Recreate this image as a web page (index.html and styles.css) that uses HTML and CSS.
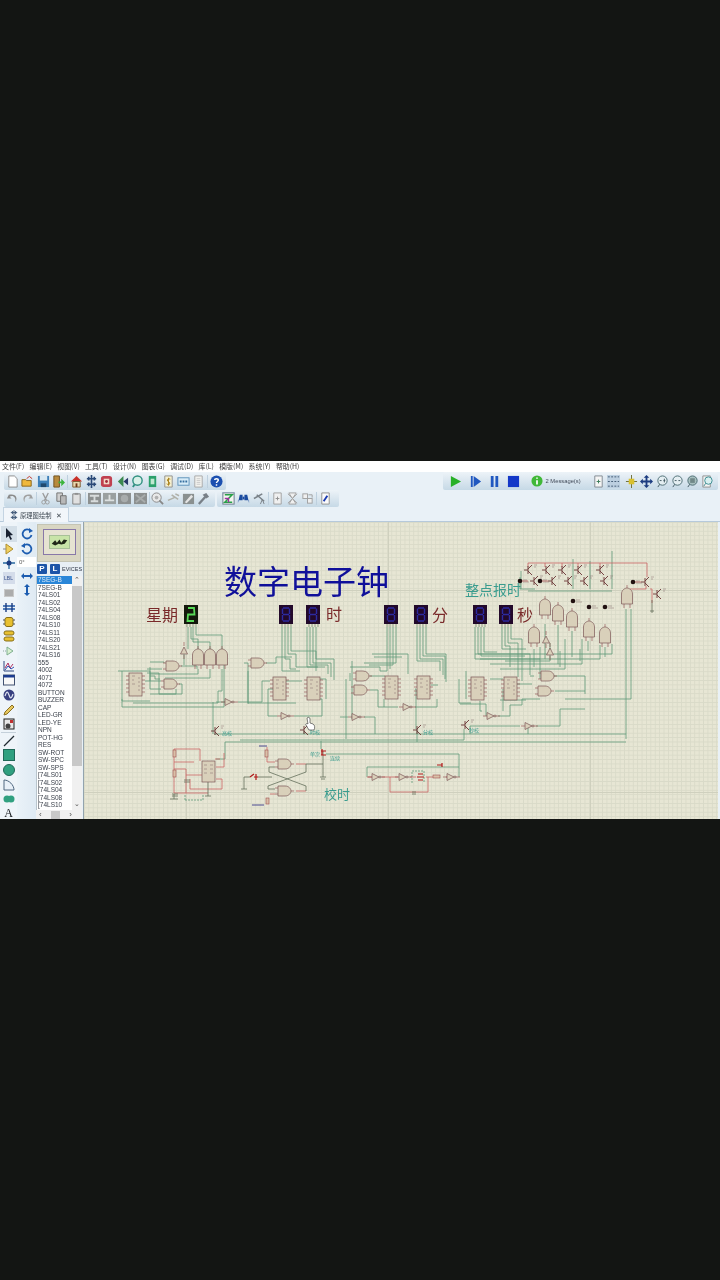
FILE: index.html
```html
<!DOCTYPE html>
<html lang="zh">
<head>
<meta charset="utf-8">
<title>数字电子钟</title>
<link rel="stylesheet" href="styles.css">
</head>
<body>
<svg class="defs" width="0" height="0">
  <defs>
    <g id="and-h"><path d="M-9 -3H-6M-9 3H-6M6 0H10" class="pin"/><path d="M-6 -5H1C5 -5 7 -2 7 0C7 2 5 5 1 5H-6Z" class="gate"/></g>
    <g id="and-v"><path d="M-3 8V12M3 8V12M0 -8V-11" class="pin"/><path d="M-5.500 8V-2C-5.500 -6 -2 -8 0 -8C2 -8 5.500 -6 5.500 -2V8Z" class="gate"/></g>
    <g id="inv-h"><path d="M-8 0H-4M5 0H9" class="pin"/><path d="M-4 -3.500L3 0L-4 3.500Z" class="gate"/><circle cx="4" r="1" class="gate"/></g>
    <g id="inv-v"><path d="M0 -8V-4M0 5V9" class="pin"/><path d="M-3.500 4L0 -3L3.500 4Z" class="gate"/></g>
    <g id="chip"><path d="M-3 3H0M-3 7H0M-3 11H0M-3 15H0M-3 19H0M13 3H16M13 7H16M13 11H16M13 15H16M13 19H16" class="pin"/><rect width="13" height="23" class="gate"/><path d="M3 3H6M3 7H5M3 11H6M9 5H11M9 9H11M9 13H11M9 17H11" class="tiny"/></g>
    <g id="npn"><path d="M0 -4V4M0 -1L4 -5M0 1L4 5M-4 0H0" class="npn"/><path d="M6 -5H9M6 -3H8" class="tiny"/></g>
    <g id="seg"><rect width="14" height="19" class="seg-body"/><path d="M4 3H10M4 9.500H10M4 16H10M3.500 3.500V9M10.500 3.500V9M3.500 10V15.500M10.500 10V15.500" class="seg-dim"/><path d="M3 19V22M6 19V22M9 19V22M12 19V22" class="pin-green"/></g>
    <g id="dot"><circle r="2.300" class="dot"/><path d="M3 -1H7M3 1H9" class="tiny"/></g>
  </defs>
</svg>

<main class="app">
  <nav class="menubar">
    <span>文件(F)</span><span>编辑(E)</span><span>视图(V)</span><span>工具(T)</span><span>设计(N)</span><span>图表(G)</span><span>调试(D)</span><span>库(L)</span><span>模版(M)</span><span>系统(Y)</span><span>帮助(H)</span>
  </nav>

  <section class="toolbars">
    <div class="tb-row tb-row-top">
      <div class="tb tb-file">
        <svg class="ic" viewBox="0 0 14 14"><path d="M3 1H9L12 4V13H3Z" fill="#fff" stroke="#8a8a8a"/></svg>
        <svg class="ic" viewBox="0 0 14 14"><path d="M1 5H5L6 6H11V12H1Z" fill="#f0b83c" stroke="#8a6418"/><path d="M6 4L9 1.500L12 4" fill="none" stroke="#c03020"/></svg>
        <svg class="ic" viewBox="0 0 14 14"><path d="M1 1H13V13H1Z" fill="#3d7fb8"/><path d="M3 1H11V6H3Z" fill="#d8e8f2"/><path d="M4 9H10V13H4Z" fill="#20496e"/></svg>
        <svg class="ic" viewBox="0 0 14 14"><path d="M2 1H8V13H2Z" fill="#b88a3c" stroke="#6d5020"/><path d="M7 7H10V4L14 8L10 12V9H7Z" fill="#3cb43c"/></svg>
        <i class="sep"></i>
        <svg class="ic" viewBox="0 0 14 14"><path d="M1 7L7 1L13 7Z" fill="#c83028"/><path d="M3 7H11V13H3Z" fill="#e8d8b0" stroke="#7a5a30"/><path d="M6 9H8V13H6Z" fill="#703818"/></svg>
        <svg class="ic" viewBox="0 0 14 14"><path d="M7 0V14M2 4H12M2 10H12M4 2V6M10 2V6M4 8V12M10 8V12" stroke="#2a4a78" stroke-width="1.800" fill="none"/></svg>
        <svg class="ic" viewBox="0 0 14 14"><rect x="1" y="1" width="12" height="12" rx="3" fill="#c04050"/><rect x="4" y="4" width="6" height="6" fill="#f2d8c8"/><circle cx="7" cy="7" r="1.500" fill="#a02838"/></svg>
        <svg class="ic" viewBox="0 0 14 14"><path d="M8 1L2 7L8 13Z" fill="#3c8a50"/><path d="M13 3L8 7L13 11Z" fill="#283868"/></svg>
        <svg class="ic" viewBox="0 0 14 14"><circle cx="7" cy="6" r="5" fill="#d8f0e8" stroke="#2f9080" stroke-width="1.500"/><path d="M4 10L2 13" stroke="#2f9080" stroke-width="2"/></svg>
        <svg class="ic" viewBox="0 0 14 14"><path d="M3 1H11V13H3Z" fill="#2ca06c"/><rect x="5" y="4" width="4" height="6" fill="#bfe8d0"/></svg>
        <svg class="ic" viewBox="0 0 14 14"><path d="M3 1H11V13H3Z" fill="#f6f0d0" stroke="#909090"/><path d="M9 4.500C7 3.500 5 4.500 6 6.500C7.500 7.500 9 8 8 10C7 10.500 5.500 10 5 9.500M7 3V11.500" stroke="#a88018" fill="none"/></svg>
        <svg class="ic" viewBox="0 0 14 14"><rect x="1" y="3" width="12" height="8" fill="#d8ecf8" stroke="#5a90b8"/><path d="M3 7H5M6 7H8M9 7H11" stroke="#3870a0" stroke-width="2"/></svg>
        <svg class="ic" viewBox="0 0 14 14"><path d="M3 1H11V13H3Z" fill="#f2f2ee" stroke="#a8a8a8"/><path d="M5 4H9M5 6H9M5 8H9M5 10H9" stroke="#c8c8c8"/></svg>
        <i class="sep"></i>
        <svg class="ic" viewBox="0 0 14 14"><circle cx="7" cy="7" r="6.500" fill="#1c50b0"/><path d="M5 5.500C5 3.500 9 3.500 9 5.500C9 7 7 7 7 8.500M7 10V11.500" stroke="#fff" stroke-width="1.600" fill="none"/></svg>
      </div>
      <div class="tb tb-sim">
        <svg class="sim" viewBox="0 0 14 14"><path d="M2 1L13 7L2 13Z" fill="#28b028"/></svg>
        <svg class="sim" viewBox="0 0 14 14"><path d="M2 1H4V13H2ZM5 1L13 7L5 13Z" fill="#2058c0"/></svg>
        <svg class="sim" viewBox="0 0 14 14"><path d="M3 1H6V13H3ZM8 1H11V13H8Z" fill="#2058c0"/></svg>
        <svg class="sim" viewBox="0 0 14 14"><path d="M1 1H13V13H1Z" fill="#1438c8"/></svg>
        <svg class="info" viewBox="0 0 14 14"><circle cx="7" cy="7" r="6.500" fill="#40b838"/><path d="M7 3V4.500M7 6V11" stroke="#fff" stroke-width="2"/></svg>
        <span class="msg">2 Message(s)</span>
        <svg class="ic" viewBox="0 0 14 14"><path d="M3 1H11V13H3Z" fill="#f4f4f4" stroke="#808890"/><path d="M5 7H9M7 5V9" stroke="#3a7a58"/></svg>
        <svg class="ic ic-on" viewBox="0 0 14 14"><path d="M1 2H13M1 7H13M1 12H13" stroke="#405870" stroke-dasharray="2 1.500"/></svg>
        <svg class="ic ic-gap" viewBox="0 0 14 14"><path d="M7 0V14M1 7H13" stroke="#6a6a30"/><rect x="4" y="4" width="6" height="6" fill="#d8c030"/></svg>
        <svg class="ic" viewBox="0 0 14 14"><path d="M7 0L10 3H8V6H11V4L14 7L11 10V8H8V11H10L7 14L4 11H6V8H3V10L0 7L3 4V6H6V3H4Z" fill="#1c3c80"/></svg>
        <svg class="ic" viewBox="0 0 14 14"><circle cx="7" cy="6" r="5" fill="#e4eef2" stroke="#4a6a70"/><path d="M4 6H6M8 6H10M9 4V8M4 10L2 13" stroke="#405860"/></svg>
        <svg class="ic" viewBox="0 0 14 14"><circle cx="7" cy="6" r="5" fill="#e4eef2" stroke="#4a6a70"/><path d="M4 6H6M8 6H10M4 10L2 13" stroke="#405860"/></svg>
        <svg class="ic" viewBox="0 0 14 14"><circle cx="7" cy="6" r="5" fill="#a8c0c0" stroke="#4a6a70"/><rect x="4.500" y="3.500" width="5" height="5" fill="#708888"/><path d="M4 10L2 13" stroke="#405860"/></svg>
        <svg class="ic" viewBox="0 0 14 14"><path d="M2 1H10V13H2Z" fill="#f4f4f4" stroke="#909090"/><circle cx="8" cy="6" r="4" fill="#d8f0f0" stroke="#3a8a90"/><path d="M5 9L3 12" stroke="#3a8a90"/></svg>
      </div>
    </div>
    <div class="tb-row">
      <div class="tb tb-edit">
        <svg class="ic" viewBox="0 0 14 14"><path d="M3 3L1 7L6 7L4 5C7 3 11 5 10 11C13 7 11 1 3 3Z" fill="#8a8a8a"/></svg>
        <svg class="ic" viewBox="0 0 14 14"><path d="M11 3L13 7L8 7L10 5C7 3 3 5 4 11C1 7 3 1 11 3Z" fill="#a0a0a0"/></svg>
        <i class="sep"></i>
        <svg class="ic" viewBox="0 0 14 14"><path d="M4 1L8 9M10 1L6 9" stroke="#9a9a9a" stroke-width="1.400"/><circle cx="5" cy="11" r="2" fill="none" stroke="#9a9a9a"/><circle cx="9" cy="11" r="2" fill="none" stroke="#9a9a9a"/></svg>
        <svg class="ic" viewBox="0 0 14 14"><path d="M2 1H8V10H2Z" fill="#d0d0d0" stroke="#707070"/><path d="M6 4H12V13H6Z" fill="#b8b8b8" stroke="#707070"/></svg>
        <svg class="ic" viewBox="0 0 14 14"><path d="M3 2H11V13H3Z" fill="#e0e0e0" stroke="#808080"/><path d="M5 1H9V3H5Z" fill="#909090"/></svg>
        <i class="sep"></i>
        <svg class="ic" viewBox="0 0 14 14"><path d="M0 1H14V13H0Z" fill="#8c9090"/><path d="M2 3H12V5H8V9H11V11H3V9H6V5H2Z" fill="#d8dcdc"/></svg>
        <svg class="ic" viewBox="0 0 14 14"><path d="M0 1H14V13H0Z" fill="#9aa0a0"/><path d="M6 3H8V8H12V10H2V8H6Z" fill="#dce0e0"/></svg>
        <svg class="ic" viewBox="0 0 14 14"><path d="M0 1H14V13H0Z" fill="#8c9090"/><circle cx="7" cy="7" r="4" fill="#a8acac"/></svg>
        <svg class="ic" viewBox="0 0 14 14"><path d="M0 1H14V13H0Z" fill="#8c9090"/><path d="M2 3L12 11M12 3L2 11" stroke="#a8acac" stroke-width="2"/></svg>
        <i class="sep"></i>
        <svg class="ic" viewBox="0 0 14 14"><circle cx="6" cy="6" r="5" fill="#e8e8e8" stroke="#888"/><circle cx="6" cy="6" r="2" fill="#b0b0b0"/><path d="M9 9L13 13" stroke="#888" stroke-width="2"/></svg>
        <svg class="ic" viewBox="0 0 14 14"><path d="M1 9L8 6M5 3L12 8M9 2L13 4" stroke="#b0b0a8" stroke-width="1.600"/></svg>
        <svg class="ic" viewBox="0 0 14 14"><path d="M1 2H13V13H1Z" fill="#8a9090"/><path d="M3 11L10 3L12 5L5 12Z" fill="#e4e4e4"/></svg>
        <svg class="ic" viewBox="0 0 14 14"><path d="M2 13L9 5" stroke="#788088" stroke-width="2.500"/><path d="M6 3L10 1L13 5L10 7Z" fill="#788088"/></svg>
      </div>
      <div class="tb tb-tools">
        <svg class="ic ic-on" viewBox="0 0 14 14"><rect x="1" y="1" width="12" height="12" fill="#f4f4f0" stroke="#708090"/><path d="M3 3H11L3 11H11" stroke="#28a048" stroke-width="1.600" fill="none"/><path d="M3 7H7V11" stroke="#a030a0" stroke-width="1.500" fill="none"/></svg>
        <svg class="ic" viewBox="0 0 14 14"><path d="M1 12L3 3H6V9H1ZM13 12L11 3H8V9H13Z" fill="#1c4ca0"/><path d="M6 5H8V8H6Z" fill="#1c4ca0"/></svg>
        <svg class="ic" viewBox="0 0 14 14"><path d="M1 7L10 2M4 3L12 10" stroke="#7a8288" stroke-width="1.600"/><path d="M8 13L10 8L12 13" stroke="#7a8288" fill="none"/></svg>
        <i class="sep"></i>
        <svg class="ic" viewBox="0 0 14 14"><path d="M3 1H11V13H3Z" fill="#f0f0f0" stroke="#a0a0a0"/><path d="M5 7H9M7 5V9" stroke="#909090"/></svg>
        <svg class="ic" viewBox="0 0 14 14"><path d="M3 1H11L3 13H11Z" fill="#f0f0f0" stroke="#a0a0a0"/><path d="M2 2L12 12M12 2L2 12" stroke="#a8a8a8"/></svg>
        <svg class="ic" viewBox="0 0 14 14"><rect x="2" y="2" width="5" height="5" fill="#f0f0f0" stroke="#a0a0a0"/><rect x="7" y="7" width="5" height="5" fill="#f0f0f0" stroke="#a0a0a0"/><path d="M8 3H12V6" stroke="#a0a0a0" fill="none"/></svg>
        <i class="sep"></i>
        <svg class="ic" viewBox="0 0 14 14"><path d="M3 1H11V13H3Z" fill="#fafafa" stroke="#909090"/><path d="M5 10L9 4" stroke="#1838b0" stroke-width="2"/></svg>
      </div>
    </div>
  </section>

  <div class="tabs">
    <div class="tab">
      <svg class="tab-ic" viewBox="0 0 10 12"><path d="M5 0V12M1 3H9M1 9H9M3 1V5M7 1V5M3 7V11M7 7V11" stroke="#405878" stroke-width="1.200" fill="none"/></svg>
      <span>原理图绘制</span>
      <b class="tab-x">✕</b>
    </div>
  </div>

  <div class="workspace">
    <aside class="tool-col">
      <svg class="tool tool-on" viewBox="0 0 12 12"><path d="M3 0L3 10L5.500 8L7.500 12L9 11L7 7.500L10 7Z" fill="#182030"/></svg>
      <svg class="tool" viewBox="0 0 12 12"><path d="M3 1L10 6L3 11Z" fill="#f0d060" stroke="#b09030"/><path d="M0 6H3" stroke="#888"/></svg>
      <svg class="tool" viewBox="0 0 12 12"><path d="M6 0V12M0 6H12" stroke="#2868a0" stroke-width="1.300"/><circle cx="6" cy="6" r="2.500" fill="#1c3c80"/></svg>
      <span class="tool tool-lbl">LBL</span>
      <svg class="tool" viewBox="0 0 12 12"><path d="M1 2H11V10H1Z" fill="#c8c8c8"/><path d="M2 4H10M2 6H10M2 8H10" stroke="#909090"/></svg>
      <svg class="tool" viewBox="0 0 12 12"><path d="M0 5H12M0 8H12" stroke="#2058a8" stroke-width="1.600"/><path d="M3 2V11M9 2V11" stroke="#1c3c80" stroke-width="1.400"/></svg>
      <svg class="tool" viewBox="0 0 12 12"><rect x="2" y="1.500" width="8" height="9" rx="2" fill="#e8c030" stroke="#887018"/><path d="M0 4H2M0 8H2M10 4H12M10 8H12" stroke="#505050"/></svg>
      <svg class="tool" viewBox="0 0 12 12"><rect x="1" y="1" width="10" height="4" rx="2" fill="#e8c030" stroke="#887018"/><rect x="1" y="7" width="10" height="4" rx="2" fill="#e8c030" stroke="#887018"/></svg>
      <svg class="tool" viewBox="0 0 12 12"><path d="M4 2L10 6L4 10Z" fill="#d8f0d0" stroke="#80b090"/><path d="M0 6H4" stroke="#90a8a0" stroke-dasharray="1 1"/></svg>
      <svg class="tool" viewBox="0 0 12 12"><path d="M1 1V11H11" stroke="#304880" fill="none"/><path d="M2 8L5 3L7 8L10 4" stroke="#b03060" fill="none"/><path d="M2 10L5 6L8 9L11 7" stroke="#3050b0" fill="none"/></svg>
      <svg class="tool" viewBox="0 0 12 12"><rect x="0.500" y="1" width="11" height="10" fill="#f8f8f8" stroke="#405070"/><path d="M0.500 1H11.500V3.500H0.500Z" fill="#1c3c90"/></svg>
      <svg class="tool" viewBox="0 0 12 12"><circle cx="6" cy="6" r="5.500" fill="#384080"/><path d="M2 7C4 1 5 3 6 6C7 9 8 11 10 5" stroke="#e0e4f0" fill="none" stroke-width="1.200"/></svg>
      <svg class="tool" viewBox="0 0 12 12"><path d="M1 11L2 8L9 1L11 3L4 10Z" fill="#e8c860" stroke="#8a7020"/></svg>
      <svg class="tool" viewBox="0 0 12 12"><rect x="1" y="1" width="10" height="10" fill="#e8e8e8" stroke="#202020"/><circle cx="5" cy="8" r="2.500" fill="#404040"/><path d="M7 2H10V5H7Z" fill="#c03030"/></svg>
      <i class="tool-rule"></i>
      <svg class="tool" viewBox="0 0 12 12"><path d="M1 11L11 1" stroke="#202830" stroke-width="1.200"/></svg>
      <svg class="tool" viewBox="0 0 12 12"><rect x="0.500" y="0.500" width="11" height="11" fill="#30a080" stroke="#206858"/></svg>
      <svg class="tool" viewBox="0 0 12 12"><circle cx="6" cy="6" r="5.500" fill="#30a080" stroke="#206858"/></svg>
      <svg class="tool" viewBox="0 0 12 12"><path d="M1 1C6 1 11 6 11 11H1Z" fill="#e8f0f8" stroke="#506880"/></svg>
      <svg class="tool" viewBox="0 0 12 12"><circle cx="4" cy="6" r="3.500" fill="#30a080"/><circle cx="8" cy="6" r="3.500" fill="#30a080"/></svg>
      <span class="tool tool-a">A</span>
    </aside>

    <aside class="orient-col">
      <svg class="tool" viewBox="0 0 12 12"><path d="M9.500 3A4.500 4.500 0 1 0 10.500 7" stroke="#1c5cb0" stroke-width="1.800" fill="none"/><path d="M8 0L12 3L8 5Z" fill="#1c5cb0"/></svg>
      <svg class="tool" viewBox="0 0 12 12"><path d="M2.500 3A4.500 4.500 0 1 1 1.500 7" stroke="#1c5cb0" stroke-width="1.800" fill="none"/><path d="M4 0L0 3L4 5Z" fill="#1c5cb0"/></svg>
      <span class="angle">0°</span>
      <svg class="tool" viewBox="0 0 12 12"><path d="M0 6L3 3V5H9V3L12 6L9 9V7H3V9Z" fill="#1c5cb0"/></svg>
      <svg class="tool" viewBox="0 0 12 12"><path d="M6 0L9 3H7V9H9L6 12L3 9H5V3H3Z" fill="#1c5cb0"/></svg>
    </aside>

    <aside class="device-col">
      <div class="preview"><div class="preview-frame"><div class="preview-sheet"><svg viewBox="0 0 22 10" class="preview-art"><path d="M2 7L6 3L8 6L11 2L13 6L16 2L20 3L17 7L13 8L10 7L6 9Z" fill="#202818"/></svg></div></div></div>
      <div class="device-head"><b class="pl">P</b><b class="pl">L</b><span class="dev-title">EVICES</span></div>
      <div class="device-body">
        <ul class="device-list">
          <li class="sel">7SEG-B</li><li>7SEG-B</li><li>74LS01</li><li>74LS02</li><li>74LS04</li><li>74LS08</li><li>74LS10</li><li>74LS11</li><li>74LS20</li><li>74LS21</li><li>74LS16</li><li>555</li><li>4002</li><li>4071</li><li>4072</li><li>BUTTON</li><li>BUZZER</li><li>CAP</li><li>LED-GR</li><li>LED-YE</li><li>NPN</li><li>POT-HG</li><li>RES</li><li>SW-ROT</li><li>SW-SPC</li><li>SW-SPS</li><li>[74LS01</li><li>[74LS02</li><li>[74LS04</li><li>[74LS08</li><li>[74LS10</li>
        </ul>
        <div class="vscroll"><span class="sc-arrow">⌃</span><span class="sc-thumb"></span><span class="sc-arrow sc-down">⌄</span></div>
      </div>
      <div class="hscroll"><span>‹</span><i></i><span>›</span></div>
    </aside>

    <section class="canvas">
      <svg class="schematic" viewBox="84 523 634 296" width="634" height="296">
        <g class="wires-green">
          <!-- day -->
          <path d="M188 628V650M191 628V640H198V650M193 628V643H210V650M196 628V636H222V650"/>
          <path d="M122 672H150V682M118 672H122V702H150M122 700V708H224V662M147 670H162M150 663H164V664M150 668V690H161M147 674H159V695H176V690M150 677H155V680H160M145 682H161"/>
          <path d="M181 667H197V670M198 670V675H150M210 670V679H165M222 670V692H218V704H133M179 685H182V695H150M184 650V666"/>
          <!-- hours -->
          <path d="M282 628V672H300M285 628V660H290V670H296M288 628V655H296V668H318M291 628V652H316V672"/>
          <path d="M307 628V668H325M310 628V666H328V675M313 628V664H331V678M316 628V660H334V681"/>
          <path d="M266 664H276V658H292M248 664V705M244 664H248M248 672V704H296M268 690H273M268 690V717H277M294 717H322V700H320M228 703H216M213 703V735M238 703H262V682H270M320 680H326V700M286 682H302"/>
          <!-- minutes -->
          <path d="M387 628V672H380V668H350M390 628V670M393 628V666H369M396 628V664H364M417 628V662H440V672M420 628V660H443V676M423 628V657H445V680M426 628V655H446V683"/>
          <path d="M352 662V720M346 680V740M350 674V682M370 677H385M370 691H378V708H398M384 700V708M372 655H408V675M374 658H402M415 708H437V700M431 686H438M407 708V706M364 718H375V735M415 690H416V730M340 718H348"/>
          <!-- seconds -->
          <path d="M475 628V660H540M478 628V655H530V676M481 628V657H525M484 628V653H497M502 628V650H526M505 628V647H510V668M508 628V644H518V678M511 628V640H522V682"/>
          <path d="M459 680V704H471M466 672V700M480 702V712H482M460 705H486V717M498 717H510V706H522V700H540M517 685H532M530 677H534M550 677H585V695M555 692H585M536 727H560V710H585M503 690V712M500 701H526M490 680H503M520 727H470V735M580 650V662M560 652V668"/>
          <path d="M475 655H612V645M480 660H600V646M490 665H582V640M500 670H565V640M505 662H550V660M540 648V680M545 625V660M558 626V665M572 632V658M588 642V652M605 648V658M534 650V668M550 644V660"/>
          <path d="M626 610V740M631 610V700H565"/>
          <!-- busses -->
          <path d="M225 743H626M214 735H626M225 743V760H216M240 741H464V740M321 742V750M464 740V730M528 728V735M417 730V743M304 732V735"/>
          <!-- bottom right loop -->
          <path d="M326 755H459V778M367 778V768H459"/>
          <path d="M521 590V572M535 590H520V578M573 560V590M590 562V590M612 552V590M528 592H612"/>
          <path d="M185 801H203V795M185 801V796" stroke-dasharray="2 1"/>
          <path d="M412 784V772H424V784" stroke-dasharray="2 1"/>
        </g>
        <g class="wires-red">
          <path d="M528 564H647V578M545 564V568M562 564V568M578 564V568M600 564V568"/>
          <path d="M528 564V568M520 582H528M540 582H548M633 583H641M646 587V590H630M650 590H652V604"/>
          <!-- 555 section -->
          <path d="M174 750V794M174 750H200V762M174 763H194M174 770H186V776H202M186 776V794M174 794H208M216 768H224V754M216 780H222V790H190V780M215 760H220"/>
          <path d="M267 763H275M267 763V748M270 795H275M296 765H306M296 792H306"/>
          <path d="M367 778H372M382 778H398M410 778H416M426 778H436M446 778H450M390 778V793H428V778"/>
        </g>
        <g class="wires-dark">
          <path d="M306 765V773L268 787V790H275M306 792V787L269 773V768H275M306 765H323"/>
          <path d="M323 752V778M320 778H326M321 780H325M244 778V790M241 790H247M244 778H250M258 778H272M208 783V797M205 797H211M174 795V800M170 800H178"/>
        </g>

        <use href="#seg" x="279" y="606"/><use href="#seg" x="306" y="606"/>
        <use href="#seg" x="384" y="606"/><use href="#seg" x="414" y="606"/>
        <use href="#seg" x="473" y="606"/><use href="#seg" x="499" y="606"/>
        <g transform="translate(184 606)">
          <rect width="14" height="19" class="seg-body-day"/>
          <path d="M4 3H10L10.500 9.500H4L3.500 16H10" class="seg-lit"/>
          <path d="M3 19V22M6 19V22M9 19V22M12 19V22" class="pin-green"/>
        </g>

        <use href="#and-v" x="198" y="658"/><use href="#and-v" x="210" y="658"/><use href="#and-v" x="222" y="658"/>
        <use href="#and-h" x="172" y="667"/><use href="#and-h" x="170" y="685"/>
        <use href="#inv-v" x="184" y="651"/>
        <use href="#chip" x="129" y="674"/>
        <use href="#inv-h" x="229" y="703"/><use href="#inv-h" x="285" y="717"/>
        <use href="#and-h" x="257" y="664"/>
        <use href="#chip" x="273" y="678"/><use href="#chip" x="307" y="678"/>
        <use href="#npn" x="215" y="732"/><use href="#npn" x="304" y="731"/>

        <use href="#and-h" x="362" y="677"/><use href="#and-h" x="360" y="691"/>
        <use href="#chip" x="385" y="677"/><use href="#chip" x="417" y="677"/>
        <use href="#inv-h" x="407" y="708"/><use href="#inv-h" x="356" y="718"/>
        <use href="#npn" x="417" y="731"/>

        <use href="#chip" x="471" y="678"/><use href="#chip" x="504" y="678"/>
        <use href="#and-h" x="547" y="677"/><use href="#and-h" x="544" y="692"/>
        <use href="#inv-h" x="491" y="717"/><use href="#inv-h" x="529" y="727"/>
        <use href="#npn" x="465" y="726"/>

        <use href="#npn" x="528" y="571"/><use href="#npn" x="546" y="571"/><use href="#npn" x="562" y="571"/><use href="#npn" x="578" y="571"/><use href="#npn" x="600" y="571"/>
        <use href="#npn" x="534" y="582"/><use href="#npn" x="552" y="582"/><use href="#npn" x="568" y="582"/><use href="#npn" x="584" y="582"/><use href="#npn" x="604" y="582"/>
        <use href="#npn" x="645" y="583"/><use href="#npn" x="657" y="595"/>
        <use href="#dot" x="520" y="582"/><use href="#dot" x="540" y="582"/><use href="#dot" x="573" y="602"/><use href="#dot" x="589" y="608"/><use href="#dot" x="605" y="608"/><use href="#dot" x="633" y="583"/>
        <use href="#and-v" x="545" y="608"/><use href="#and-v" x="558" y="614"/><use href="#and-v" x="572" y="620"/><use href="#and-v" x="589" y="630"/><use href="#and-v" x="605" y="636"/><use href="#and-v" x="534" y="636"/><use href="#and-v" x="627" y="597"/>
        <use href="#inv-v" x="546" y="640"/><use href="#inv-v" x="550" y="652"/>
        <path class="wires-dark" d="M652 601V612M650 612H654M651 613H653"/>

        <rect x="202" y="762" width="13" height="21" class="gate"/>
        <path class="tiny" d="M204 766H207M204 770H207M204 774H207M210 766H213M210 770H213M210 774H213"/>
        <rect x="173" y="751" width="3" height="7" class="part"/><rect x="173" y="771" width="3" height="7" class="part"/>
        <path class="wires-dark" d="M184 781H190M184 783H190M172 795H178M172 797H178"/>
        <use href="#and-h" x="284" y="765"/><use href="#and-h" x="284" y="792"/>
        <rect x="265" y="751" width="3" height="7" class="part"/><rect x="266" y="799" width="3" height="6" class="part"/>
        <path class="probe" d="M259 747H267M252 806H264"/>
        <path class="red-part" d="M250 778L254 775M254 778H258M256 775V781"/>
        <path class="red-part" d="M322 750V756M321 752H326M321 756H326"/>
        <use href="#inv-h" x="376" y="778"/><use href="#inv-h" x="403" y="778"/><use href="#inv-h" x="451" y="778"/>
        <rect x="433" y="776" width="7" height="3" class="part"/>
        <path class="red-part" d="M417 778H424M418 775H423M418 781H423M437 766H442M442 764V768"/>
        <path class="wires-dark" d="M412 793H416M412 795H416"/>

        <text x="224" y="595" class="t-title">数字电子钟</text>
        <text x="146" y="622" class="t-label">星期</text>
        <text x="326" y="621" class="t-label">时</text>
        <text x="432" y="622" class="t-label">分</text>
        <text x="517" y="622" class="t-label">秒</text>
        <text x="465" y="596" class="t-teal">整点报时</text>
        <text x="324" y="800" class="t-teal t-teal-s">校时</text>
        <text x="222" y="736" class="t-mini">高校</text>
        <text x="310" y="735" class="t-mini">时校</text>
        <text x="423" y="735" class="t-mini">分校</text>
        <text x="469" y="733" class="t-mini">秒校</text>
        <text x="310" y="757" class="t-mini">单次</text>
        <text x="330" y="761" class="t-mini">连续</text>

        <path class="cursor" d="M307 719C308 718 310 718 310 720V724L313 725C315 726 315 729 314 731H309L306 726C305 725 307 724 308 725Z"/>
      </svg>
    </section>
  </div>
</main>
</body>
</html>
```

FILE: styles.css
```css
* { box-sizing: border-box; }

html, body {
  margin: 0;
  height: 1280px;
  background: #131513;
  overflow: hidden;
}

body {
  padding-top: 461px;
  font-family: "Liberation Sans", "Noto Sans CJK SC", sans-serif;
}

.defs { position: absolute; }

.app {
  height: 358px;
  width: 720px;
  display: flex;
  flex-direction: column;
  background: #e9f1f7;
  filter: blur(0.35px);
  overflow: hidden;
}

/* Menu */
.menubar {
  height: 11px;
  flex: none;
  background: #fff;
  display: flex;
  gap: 5.300px;
  padding-left: 2px;
  font-family: "Noto Sans CJK SC", sans-serif;
  font-size: 6.900px;
  line-height: 11px;
  color: #3a3a3a;
  white-space: nowrap;
}

/* Toolbars */
.toolbars {
  height: 35px;
  flex: none;
  display: flex;
  flex-direction: column;
}

.tb-row {
  height: 17px;
  display: flex;
  align-items: stretch;
  padding-left: 4px;
}

.tb-row-top { height: 18px; }

.tb {
  display: flex;
  align-items: center;
  background: linear-gradient(#edf3f8, #c6d9e6);
  border-radius: 2px;
}

.tb-file { width: 222px; padding-left: 1px; }
.tb-sim { margin-left: 217px; width: 275px; padding-left: 3px; }
.tb-edit { width: 211px; padding-left: 1px; }
.tb-tools { margin-left: 2px; width: 122px; padding-left: 4px; }

.ic {
  flex: none;
  width: 13px;
  height: 13px;
  margin: 0 1.150px;
}

.ic-on { background: #bccfe0; }
.ic-gap { margin-left: 4px; }

.sep {
  flex: none;
  width: 1px;
  height: 13px;
  margin: 0 0.800px;
  background: #bed0de;
}

.sim {
  flex: none;
  width: 13px;
  height: 13px;
  margin: 0 3.200px;
}

.info {
  flex: none;
  width: 12px;
  height: 12px;
  margin: 0 3px 0 7px;
}

.msg {
  flex: none;
  width: 45px;
  font-size: 5.800px;
  color: #404a58;
  white-space: nowrap;
}

/* Tabs */
.tabs {
  height: 15px;
  flex: none;
  padding-left: 3px;
  border-bottom: 1px solid #b6c9db;
  display: flex;
}

.tab {
  width: 66px;
  height: 15px;
  display: flex;
  align-items: center;
  background: #f2f6fa;
  border: 1px solid #c4d4e2;
  border-bottom: 0;
  padding-left: 6px;
  font-family: "Noto Sans CJK SC", sans-serif;
  font-size: 6.300px;
  color: #3c4650;
}

.tab-ic { width: 8px; height: 10px; margin-right: 2px; flex: none; }

.tab-x {
  margin-left: 5px;
  font-size: 7px;
  font-weight: 400;
  color: #404850;
}

/* Workspace */
.workspace {
  flex: 1;
  display: flex;
  min-height: 0;
}

.tool-col {
  width: 17px;
  flex: none;
  padding-top: 6px;
  display: flex;
  flex-direction: column;
  align-items: center;
  gap: 2.650px;
  background: #eef4f9;
  overflow: hidden;
}

.tool {
  flex: none;
  width: 12px;
  height: 12px;
}

.tool-on { outline: 2px solid #d4dfe8; background: #d4dfe8; }

.tool-lbl {
  font-size: 5px;
  line-height: 12px;
  text-align: center;
  color: #38508a;
  background: #d4dcea;
}

.tool-a {
  font-family: "Liberation Serif", serif;
  font-size: 12px;
  line-height: 10px;
  height: 10px;
  color: #101418;
  text-align: center;
}

.tool-rule {
  flex: none;
  width: 15px;
  height: 1px;
  margin: -1px 0;
  background: #c4d0da;
}

.orient-col {
  width: 19px;
  flex: none;
  padding-top: 6px;
  display: flex;
  flex-direction: column;
  align-items: center;
  gap: 2.500px;
  background: linear-gradient(90deg, #eaf2f8, #dfeaf3);
}

.angle {
  width: 19px;
  height: 10px;
  background: #fff;
  font-size: 6px;
  line-height: 10px;
  padding-left: 2px;
  color: #606060;
}

.device-col {
  width: 46px;
  flex: none;
  display: flex;
  flex-direction: column;
  background: #e4edf4;
}

.preview {
  height: 38px;
  flex: none;
  margin: 2px 1px 0;
  padding: 4px 5px;
  background: #d9d6c2;
  border: 1px solid #c4c4b4;
}

.preview-frame {
  height: 26px;
  width: 33px;
  padding: 5px 5px;
  background: #e6e3d2;
  border: 1px solid #8878a8;
}

.preview-sheet {
  height: 14px;
  background: #c8e4a8;
  border: 1px solid #a8c098;
}

.preview-art { display: block; width: 100%; height: 100%; }

.device-head {
  height: 14px;
  flex: none;
  display: flex;
  align-items: center;
  gap: 2px;
  padding-left: 0;
  background: #e8eff5;
  white-space: nowrap;
}

.pl {
  flex: none;
  width: 10px;
  height: 10px;
  margin-left: 1px;
  font-size: 8px;
  line-height: 10px;
  text-align: center;
  color: #fff;
  background: #1c54a8;
  border-radius: 1px;
}

.dev-title {
  flex: none;
  font-size: 5.500px;
  color: #303848;
}

.device-body {
  flex: 1;
  display: flex;
  min-height: 0;
  overflow: hidden;
  border-left: 1px solid #b8c4cc;
}

.device-list {
  width: 35px;
  flex: none;
  margin: 0;
  padding: 0;
  list-style: none;
  background: #fff;
  overflow: hidden;
  font-size: 6.500px;
  line-height: 7.500px;
  color: #383e48;
}

.device-list li {
  height: 7.500px;
  padding-left: 1px;
  white-space: nowrap;
}

.device-list .sel {
  background: #2a86d8;
  color: #dceaf8;
}

.vscroll {
  width: 10px;
  flex: none;
  display: flex;
  flex-direction: column;
  background: #f0f0f0;
  font-size: 7px;
  line-height: 8px;
  text-align: center;
  color: #505050;
}

.sc-arrow { flex: none; height: 10px; }
.sc-down { margin-top: auto; }

.sc-thumb {
  flex: none;
  height: 180px;
  background: #c8c8c8;
}

.hscroll {
  height: 9px;
  flex: none;
  display: flex;
  justify-content: space-between;
  padding: 0 10px 0 3px;
  align-items: center;
  background: #f0f0f0;
  font-size: 8px;
  color: #505050;
}

.hscroll i {
  width: 9px;
  height: 8px;
  background: #c8c8c8;
}

/* Canvas */
.canvas {
  flex: 1;
  position: relative;
  margin-left: 1px;
  margin-right: 2px;
  overflow: hidden;
  border-left: 1px solid #93a3ad;
  background-color: #e7e6d4;
  background-image:
    linear-gradient(90deg, #cfd0be 1px, transparent 1px),
    linear-gradient(#cfd0be 1px, transparent 1px),
    linear-gradient(90deg, #d9dac8 1px, transparent 1px),
    linear-gradient(#d9dac8 1px, transparent 1px);
  background-size: 202px 202px, 202px 202px, 4.400px 4.400px, 4.400px 4.400px;
  background-position: 102px 0, 0 68px, 0 0, 0 0;
}

.schematic {
  position: absolute;
  left: 0;
  top: 0;
  display: block;
}

.wires-green path, .wires-green { fill: none; stroke: #5f9a7a; stroke-width: 0.800; }
.wires-red path, .wires-red { fill: none; stroke: #cc6464; stroke-width: 0.800; }
.wires-dark path, .wires-dark { fill: none; stroke: #64705c; stroke-width: 0.800; }

.gate { fill: #d9d0ba; stroke: #7b5656; stroke-width: 0.700; }
.pin { fill: none; stroke: #9a5a5a; stroke-width: 0.700; }
.tiny { fill: none; stroke: #806a6a; stroke-width: 0.500; }
.npn { fill: none; stroke: #6a3434; stroke-width: 0.900; }
.dot { fill: #201010; }
.part { fill: #d9c0a8; stroke: #a05050; stroke-width: 0.600; }
.red-part { fill: none; stroke: #b01818; stroke-width: 1.200; }
.probe { fill: none; stroke: #4a4a90; stroke-width: 1; }

.seg-body { fill: #22092a; }
.seg-body-day { fill: #14180c; }
.seg-dim { fill: none; stroke: #2c2aa0; stroke-width: 1.400; }
.seg-lit { fill: none; stroke: #58d858; stroke-width: 1.800; }
.pin-green { fill: none; stroke: #7a8a70; stroke-width: 0.800; }

.cursor { fill: #fff; stroke: #303030; stroke-width: 0.600; }

.t-title {
  font-family: "Noto Sans CJK SC", sans-serif;
  font-size: 33px;
  fill: #10109a;
}

.t-label {
  font-family: "Noto Sans CJK SC", sans-serif;
  font-size: 16px;
  fill: #7a2a2a;
}

.t-teal {
  font-family: "Noto Sans CJK SC", sans-serif;
  font-size: 14px;
  fill: #3a9c8e;
}

.t-teal-s { font-size: 13px; }

.t-mini {
  font-family: "Noto Sans CJK SC", sans-serif;
  font-size: 5px;
  fill: #3a9c8e;
}
```
